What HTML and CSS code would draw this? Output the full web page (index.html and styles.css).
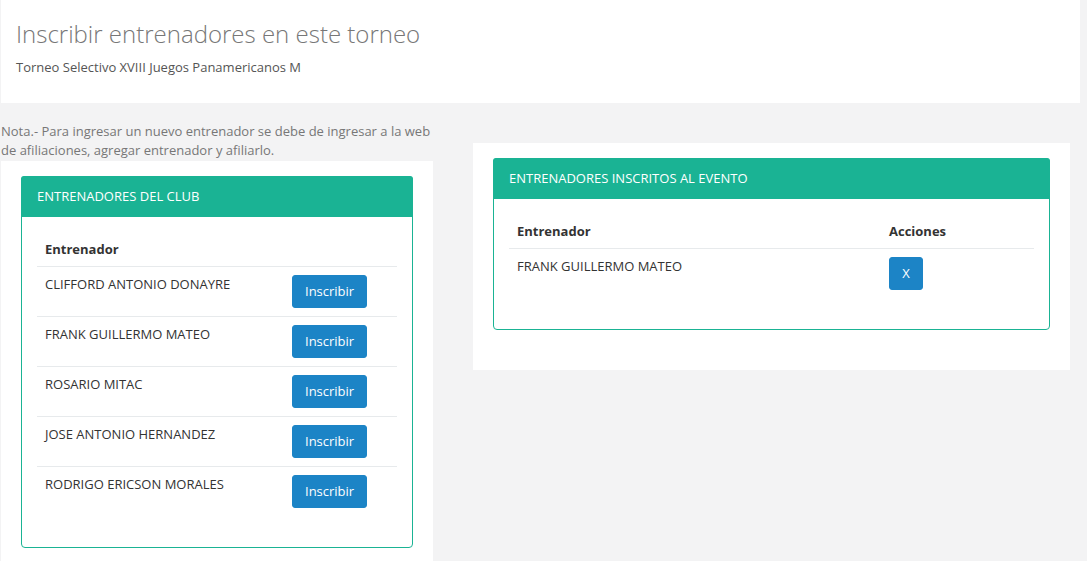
FILE: index.html
```html
<!DOCTYPE html>
<html lang="es">
<head>
<meta charset="utf-8">
<title>Inscribir entrenadores</title>
<link rel="stylesheet" href="styles.css">
</head>
<body>
<div class="page">
  <header class="page-heading">
    <h2 class="title">Inscribir entrenadores en este torneo</h2>
    <p class="subtitle">Torneo Selectivo XVIII Juegos Panamericanos M</p>
  </header>
  <div class="content">
    <div class="col-left">
      <p class="note">Nota.- Para ingresar un nuevo entrenador se debe de ingresar a la web de afiliaciones, agregar entrenador y afiliarlo.</p>
      <div class="box">
        <div class="panel">
          <div class="panel-heading">ENTRENADORES DEL CLUB</div>
          <div class="panel-body">
            <table class="table table-club">
              <thead>
                <tr><th>Entrenador</th><th></th></tr>
              </thead>
              <tbody>
                <tr><td>CLIFFORD ANTONIO DONAYRE</td><td><button class="btn">Inscribir</button></td></tr>
                <tr><td>FRANK GUILLERMO MATEO</td><td><button class="btn">Inscribir</button></td></tr>
                <tr><td>ROSARIO MITAC</td><td><button class="btn">Inscribir</button></td></tr>
                <tr><td>JOSE ANTONIO HERNANDEZ</td><td><button class="btn">Inscribir</button></td></tr>
                <tr><td>RODRIGO ERICSON MORALES</td><td><button class="btn">Inscribir</button></td></tr>
              </tbody>
            </table>
          </div>
        </div>
      </div>
    </div>
    <div class="col-right">
      <div class="box box-right">
        <div class="panel">
          <div class="panel-heading">ENTRENADORES INSCRITOS AL EVENTO</div>
          <div class="panel-body">
            <table class="table table-event">
              <thead>
                <tr><th>Entrenador</th><th>Acciones</th></tr>
              </thead>
              <tbody>
                <tr><td>FRANK GUILLERMO MATEO</td><td><button class="btn btn-x">X</button></td></tr>
              </tbody>
            </table>
          </div>
        </div>
      </div>
    </div>
  </div>
</div>
</body>
</html>
```
FILE: styles.css
```css
* { box-sizing: border-box; }
html, body { margin: 0; padding: 0; }
body {
  background: #f3f3f4;
  font-family: "Open Sans", "Liberation Sans", sans-serif;
  font-size: 13px;
  color: #676a6c;
  height: 561px;
  overflow: hidden;
}
.page {
  width: 1080px;
  padding-left: 1px;
}
.page-heading {
  background: #fff;
  height: 103px;
  padding: 17px 15px 0;
}
.title {
  margin: 0;
  font-size: 24px;
  font-weight: 300;
  line-height: 34px;
  color: #777;
}
.subtitle {
  margin: 7px 0 0;
  font-size: 13px;
  line-height: 18px;
  color: #555;
}
.content {
  display: flex;
  align-items: flex-start;
}
.col-left {
  width: 432px;
  flex: none;
}
.note {
  margin: 19px 0 0;
  line-height: 19px;
  color: #777;
}
.box {
  background: #fff;
  margin-top: 1px;
  padding: 15px 20px 14px;
}
.col-right {
  margin-left: 40px;
  width: 597px;
  flex: none;
  margin-top: 39px;
}
.box-right {
  padding: 15px 20px 40px;
}
.panel {
  border: 1px solid #1ab394;
  border-radius: 4px;
  background: #fff;
}
.panel-heading {
  background: #1ab394;
  color: #fff;
  padding: 11px 16px 11px;
  line-height: 19px;
  font-size: 13px;
  border-radius: 3px 3px 0 0;
  margin: -1px -1px 0;
}
.panel-body {
  padding: 15px;
}
.table {
  width: 100%;
  border-collapse: collapse;
  margin-bottom: 16px;
}
.table th {
  text-align: left;
  font-weight: 700;
  color: #333;
  padding: 8px;
  line-height: 18px;
  border-bottom: 1px solid #e7eaec;
  vertical-align: bottom;
}
.table td {
  padding: 8px;
  line-height: 18px;
  vertical-align: top;
  color: #333;
  border-top: 1px solid #e7eaec;
}
.table tbody tr:first-child td { border-top: none; }
.table-club td:first-child { width: 247px; }
.table-event td:first-child, .table-event th:first-child { width: 372px; }
.btn {
  font-family: "Open Sans", "Liberation Sans", sans-serif;
  font-size: 13px;
  color: #fff;
  background: #1c84c6;
  border: 1px solid #1c84c6;
  border-radius: 3px;
  padding: 6px 12px;
  line-height: 19px;
  height: 33px;
  display: block;
  width: 75px;
  text-align: center;
}
.btn-x {
  width: 34px;
  padding: 6px 0;
}
```
